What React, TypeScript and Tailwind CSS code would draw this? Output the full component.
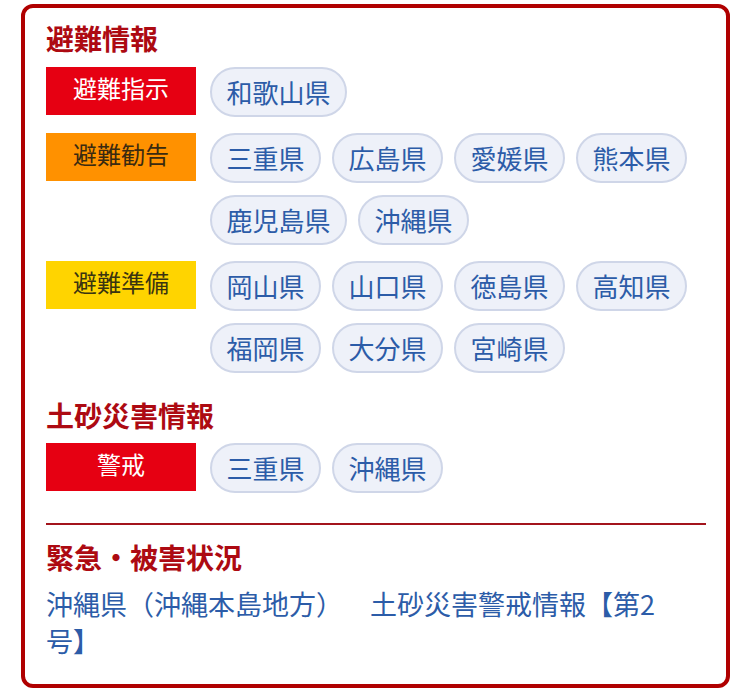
const FONT = "font-['Noto_Sans_CJK_JP','Noto_Sans',sans-serif]";

type Level = {
  label: string;
  tone: "red" | "orange" | "yellow";
  areas: string[];
};

const evacuation: Level[] = [
  { label: "避難指示", tone: "red", areas: ["和歌山県"] },
  {
    label: "避難勧告",
    tone: "orange",
    areas: ["三重県", "広島県", "愛媛県", "熊本県", "鹿児島県", "沖縄県"],
  },
  {
    label: "避難準備",
    tone: "yellow",
    areas: ["岡山県", "山口県", "徳島県", "高知県", "福岡県", "大分県", "宮崎県"],
  },
];

const landslide: Level[] = [{ label: "警戒", tone: "red", areas: ["三重県", "沖縄県"] }];

const toneClass = {
  red: "bg-[#e60012] text-white",
  orange: "bg-[#ff9100] text-[#3a2a10]",
  yellow: "bg-[#ffd400] text-[#3a3410]",
};

function SectionTitle({ children, className = "" }: { children: string; className?: string }) {
  return (
    <h2 className={`text-[28px] font-bold leading-[36px] text-[#ad0a12] ${className}`}>{children}</h2>
  );
}

function AreaPill({ name }: { name: string }) {
  return (
    <a
      href="#"
      className="flex h-[50px] items-center rounded-full border-2 border-[#cfd6e8] bg-[#eef1f9] px-[14.5px] text-[26px] leading-[36px] text-[#2c5ca8]"
    >
      {name}
    </a>
  );
}

function LevelRows({ levels }: { levels: Level[] }) {
  return (
    <div className="flex flex-col gap-4">
      {levels.map((level) => (
        <div key={level.label} className="flex items-start gap-[14px]">
          <div
            className={`flex h-[48px] w-[150px] shrink-0 items-center justify-center pb-[6px] text-[24px] leading-[32px] ${toneClass[level.tone]}`}
          >
            {level.label}
          </div>
          <div className="flex flex-wrap gap-x-[11px] gap-y-3">
            {level.areas.map((area) => (
              <AreaPill key={area} name={area} />
            ))}
          </div>
        </div>
      ))}
    </div>
  );
}

export default function App() {
  return (
    <div lang="ja" className={`min-h-[688px] bg-white pt-1 ${FONT}`}>
      <section className="ml-[21px] w-[709px] rounded-[12px] border-4 border-[#b00000] pb-[25px] pl-[21px] pr-5 pt-3">
        <SectionTitle className="mb-[11px]">避難情報</SectionTitle>
        <LevelRows levels={evacuation} />

        <SectionTitle className="mb-[10px] mt-6">土砂災害情報</SectionTitle>
        <LevelRows levels={landslide} />

        <hr className="mt-[30px] border-t-2 border-[#a3141c]" />

        <SectionTitle className="mt-[14px]">緊急・被害状況</SectionTitle>
        <p className="mt-[10px] text-[27px] leading-[37px] text-[#2c5ca8] [text-spacing-trim:space-all]">
          沖縄県（沖縄本島地方）　土砂災害警戒情報【第2号】
        </p>
      </section>
    </div>
  );
}
